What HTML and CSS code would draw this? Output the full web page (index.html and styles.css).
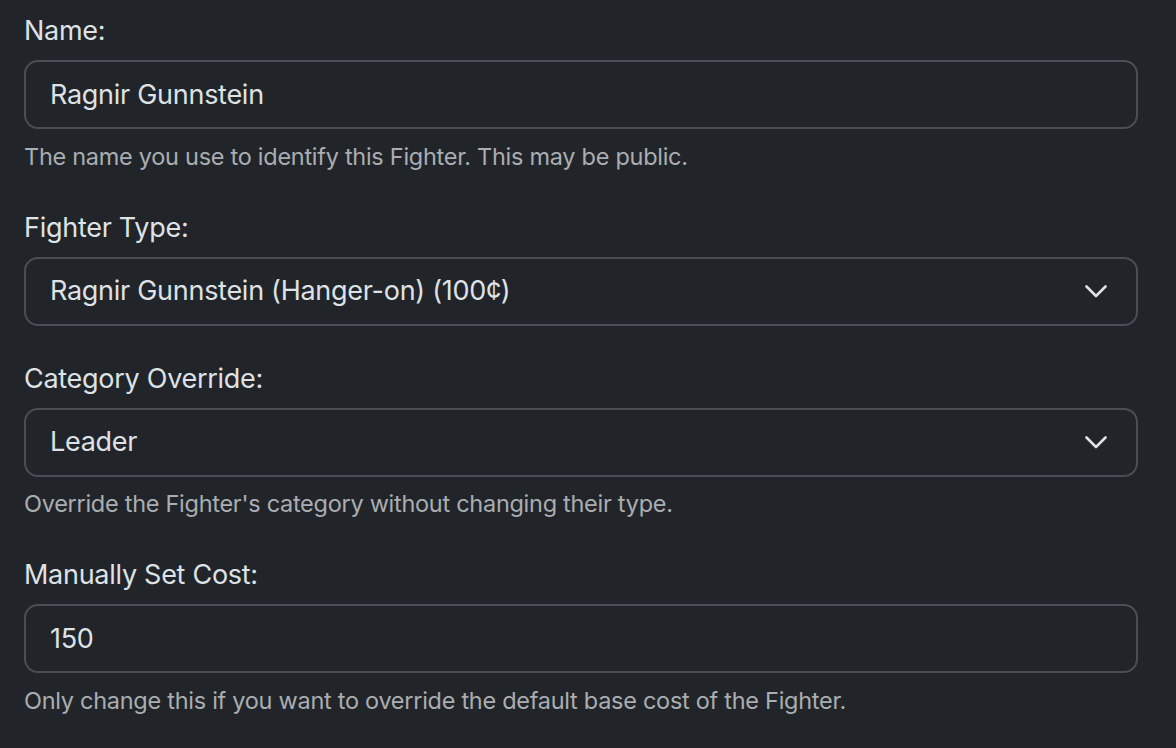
FILE: index.html
```html
<!DOCTYPE html>
<html lang="en">
<head>
<meta charset="utf-8">
<title>Edit Fighter</title>
<link rel="stylesheet" href="styles.css">
</head>
<body>
<form class="form">
  <div class="group">
    <label class="label">Name:</label>
    <div class="control"><span class="value">Ragnir Gunnstein</span></div>
    <div class="help">The name you use to identify this Fighter. This may be public.</div>
  </div>
  <div class="group">
    <label class="label">Fighter Type:</label>
    <div class="control select">
      <span class="value">Ragnir Gunnstein (Hanger-on) (100¢)</span>
      <svg class="chev" width="22" height="13" viewBox="0 0 22 13"><path d="M1.5 1.5 L11 11 L20.5 1.5" fill="none" stroke="#dee2e6" stroke-width="2.6" stroke-linecap="round" stroke-linejoin="round"/></svg>
    </div>
  </div>
  <div class="group">
    <label class="label">Category Override:</label>
    <div class="control select">
      <span class="value">Leader</span>
      <svg class="chev" width="22" height="13" viewBox="0 0 22 13"><path d="M1.5 1.5 L11 11 L20.5 1.5" fill="none" stroke="#dee2e6" stroke-width="2.6" stroke-linecap="round" stroke-linejoin="round"/></svg>
    </div>
    <div class="help">Override the Fighter's category without changing their type.</div>
  </div>
  <div class="group">
    <label class="label">Manually Set Cost:</label>
    <div class="control"><span class="value">150</span></div>
    <div class="help">Only change this if you want to override the default base cost of the Fighter.</div>
  </div>
</form>
</body>
</html>
```
FILE: styles.css
```css
html, body {
  margin: 0;
  padding: 0;
  background: #212529;
}
body {
  font-family: Inter, "Noto Sans", "Liberation Sans", sans-serif;
  color: #dee2e6;
  overflow: hidden;
  letter-spacing: -0.28px;
}
.form {
  display: flex;
  flex-direction: column;
  gap: 32px;
  padding: 10px 38px 0 24px;
}
.group {
  display: flex;
  flex-direction: column;
}
.label {
  display: block;
  font-size: 27px;
  line-height: 42px;
  margin-bottom: 8px;
  color: #dee2e6;
}
.control {
  box-sizing: border-box;
  height: 69px;
  border: 2px solid #4a4e54;
  border-radius: 14px;
  padding: 0 29px 0 24px;
  display: flex;
  align-items: center;
  justify-content: space-between;
  font-size: 27px;
  line-height: 42px;
  color: #dee2e6;
  background: #212529;
}
.chev {
  display: block;
  flex: none;
}
.help {
  margin-top: 8.5px;
  font-size: 23.5px;
  line-height: 37px;
  color: #aaadb1;
}
```
